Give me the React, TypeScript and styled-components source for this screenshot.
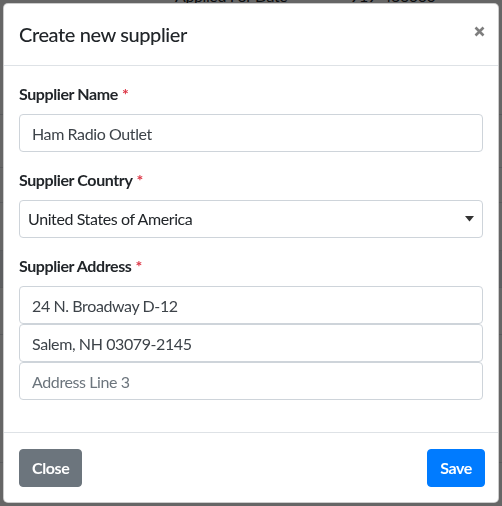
import React from "react";
import styled, { createGlobalStyle } from "styled-components";

const GlobalStyle = createGlobalStyle`
  html, body { margin: 0; padding: 0; background: #fff; }
  body {
    font-family: Lato, "Noto Sans", "Liberation Sans", sans-serif;
    color: #212529;
    letter-spacing: -0.4px;
    -webkit-font-smoothing: antialiased;
  }
  * { box-sizing: border-box; }
`;

const Page = styled.div`
  width: 502px;
  height: 506px;
  overflow: hidden;
`;

const TopRow = styled.div`
  display: flex;
  margin-top: -14px;
  height: 20px;
  line-height: 20px;
  font-size: 16px;
  color: #212529;
`;

const TopCell = styled.span<{ $w: number }>`
  width: ${(p) => p.$w}px;
  flex: none;
  white-space: nowrap;
`;

const TableRow = styled.div<{ $h: number; $shade?: boolean }>`
  height: ${(p) => p.$h}px;
  border-bottom: 1px solid #dee2e6;
  background: ${(p) => (p.$shade ? "#e9ecef" : "transparent")};
`;

const Backdrop = styled.div`
  position: fixed;
  inset: 0;
  background: rgba(0, 0, 0, 0.6);
`;

const Dialog = styled.div`
  position: fixed;
  top: 3px;
  left: 3px;
  width: 496px;
  background: #fff;
  border: 1px solid rgba(0, 0, 0, 0.2);
  border-radius: 5px;
  display: flex;
  flex-direction: column;
`;

const Header = styled.div`
  display: flex;
  align-items: flex-start;
  justify-content: space-between;
  padding: 15px 15px 16px 15px;
  border-bottom: 1px solid #dee2e6;
`;

const Title = styled.h5`
  margin: 0;
  font-size: 20px;
  font-weight: 500;
  line-height: 30px;
  color: #212529;
`;

const CloseX = styled.button`
  border: 0;
  background: transparent;
  padding: 0;
  margin: 0 -3px 0 0;
  width: 14px;
  height: 24px;
  display: flex;
  align-items: center;
  justify-content: center;
  opacity: 0.5;
  cursor: pointer;
`;

const Body = styled.div`
  padding: 16px 15px;
`;

const Group = styled.div`
  margin-bottom: 16px;
  display: flex;
  flex-direction: column;
`;

const Label = styled.label`
  font-size: 16px;
  font-weight: 700;
  line-height: 24px;
  margin-bottom: 8px;
  color: #212529;
`;

const Req = styled.span`
  color: #dc3545;
  margin-left: 4px;
`;

const Input = styled.input`
  display: block;
  width: 100%;
  height: 38px;
  padding: 6px 12px;
  font-family: inherit;
  font-size: 16px;
  letter-spacing: -0.4px;
  line-height: 24px;
  color: #3d4349;
  background: #fff;
  border: 1px solid #ced4da;
  border-radius: 4px;
  outline: none;
  &::placeholder { color: #6c757d; opacity: 1; }
`;

const Stack = styled.div`
  display: flex;
  flex-direction: column;
`;

const SelectBox = styled.div`
  display: flex;
  align-items: center;
  justify-content: space-between;
  height: 38px;
  padding: 6px 8px 6px 8px;
  font-size: 16px;
  line-height: 24px;
  color: #212529;
  border: 1px solid #ced4da;
  border-radius: 4px;
  background: #fff;
`;

const Footer = styled.div`
  display: flex;
  justify-content: space-between;
  align-items: center;
  padding: 16px 13px 15px 15px;
  border-top: 1px solid #dee2e6;
`;

const Button = styled.button<{ $variant: "secondary" | "primary" }>`
  height: 38px;
  padding: 6px 12px;
  font-family: inherit;
  font-size: 16px;
  font-weight: 700;
  letter-spacing: -0.4px;
  line-height: 24px;
  color: #fff;
  border: 1px solid ${(p) => (p.$variant === "primary" ? "#007bff" : "#6c757d")};
  background: ${(p) => (p.$variant === "primary" ? "#007bff" : "#6c757d")};
  border-radius: 4px;
  cursor: pointer;
`;

const rows = [
  { h: 109 },
  { h: 53 },
  { h: 35 },
  { h: 48 },
  { h: 37, shade: true },
  { h: 47 },
  { h: 128 },
];

export default function App() {
  return (
    <>
      <GlobalStyle />
      <Page>
        <TopRow>
          <TopCell $w={175} />
          <TopCell $w={175}>Applied For Date</TopCell>
          <TopCell $w={150}>919-436000</TopCell>
        </TopRow>
        {rows.map((r, i) => (
          <TableRow key={i} $h={r.h} $shade={r.shade} />
        ))}
      </Page>
      <Backdrop />
      <Dialog>
        <Header>
          <Title>Create new supplier</Title>
          <CloseX aria-label="Close">
            <svg width="11" height="11" viewBox="0 0 11 11">
              <path d="M1.5 1.5 L9.5 9.5 M9.5 1.5 L1.5 9.5" stroke="#000" strokeWidth="2.6" strokeLinecap="butt" />
            </svg>
          </CloseX>
        </Header>
        <Body>
          <Group>
            <Label>
              Supplier Name<Req>*</Req>
            </Label>
            <Input defaultValue="Ham Radio Outlet" />
          </Group>
          <Group>
            <Label>
              Supplier Country<Req>*</Req>
            </Label>
            <SelectBox>
              <span>United States of America</span>
              <svg width="9" height="6" viewBox="0 0 9 6">
                <path d="M0 0 H9 L4.5 5.5 Z" fill="#333" />
              </svg>
            </SelectBox>
          </Group>
          <Group>
            <Label>
              Supplier Address<Req>*</Req>
            </Label>
            <Stack>
              <Input defaultValue="24 N. Broadway D-12" />
              <Input defaultValue="Salem, NH 03079-2145" />
              <Input placeholder="Address Line 3" />
            </Stack>
          </Group>
        </Body>
        <Footer>
          <Button $variant="secondary">Close</Button>
          <Button $variant="primary">Save</Button>
        </Footer>
      </Dialog>
    </>
  );
}
